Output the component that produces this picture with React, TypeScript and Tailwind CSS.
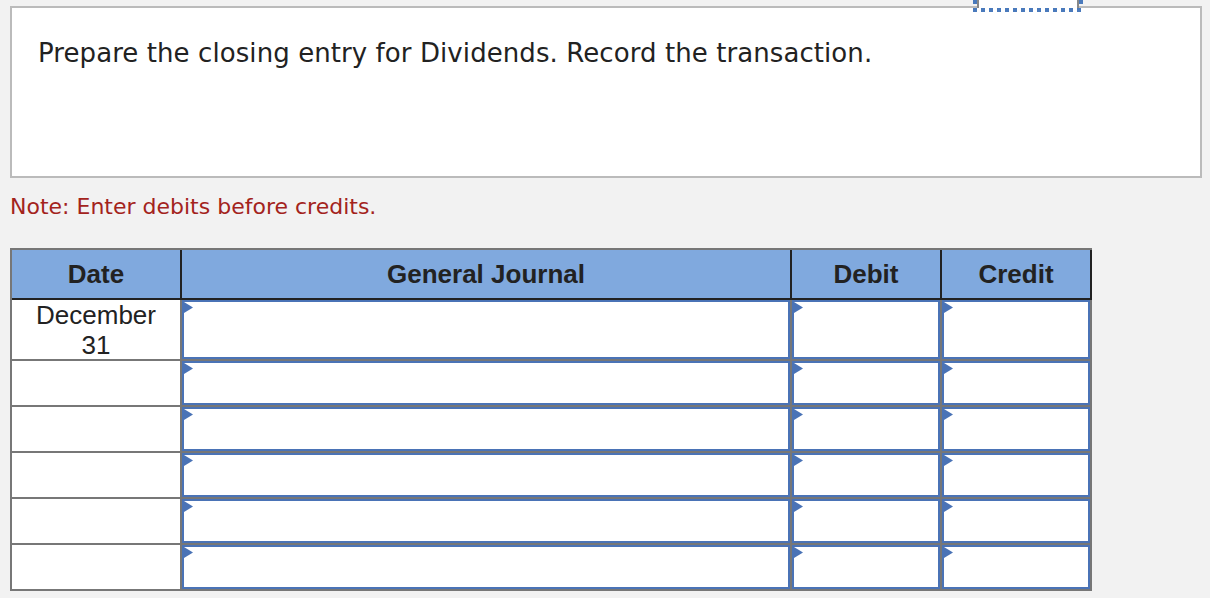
import React from 'react';

const rows = [true, false, false, false, false, false];

function Marker() {
  return (
    <svg className="absolute left-0 top-0" width="9" height="11" viewBox="0 0 9 11">
      <polygon points="0,0 9,5.5 0,11" fill="#4a73b6" />
    </svg>
  );
}

function InputCell({ width }: { width: string }) {
  return (
    <div className={`${width} border-r-2 border-[#777] h-full`}>
      <div className="relative h-full border-2 border-[#4a73b6] bg-white">
        <Marker />
      </div>
    </div>
  );
}

export default function App() {
  return (
    <div
      className="relative min-h-screen bg-[#f2f2f2] pt-[6px] pl-[10px]"
      style={{ fontFamily: '"DejaVu Sans", Verdana, sans-serif' }}
    >
      {/* focus fragment at the top */}
      <div className="absolute left-[973px] top-0 w-[110px] h-[12px]">
        <div className="mx-[4px] h-[8px] bg-white border-x-2 border-[#888]"></div>
        <div className="absolute left-0 top-0 w-[4px] h-[4px] bg-[#4a7abc]"></div>
        <div className="absolute right-0 top-0 w-[4px] h-[4px] bg-[#4a7abc]"></div>
        <div className="h-[4px] bg-[repeating-linear-gradient(90deg,#4a7abc_0px,#4a7abc_4px,transparent_4px,transparent_8px)]"></div>
      </div>

      {/* Prompt box */}
      <div className="w-[1192px] h-[172px] border-2 border-[#bbb] bg-white pl-[26px] pt-[30px]">
        <p className="text-[26px] leading-[30px] tracking-[0.08px] text-[#222]">
          Prepare the closing entry for Dividends. Record the transaction.
        </p>
      </div>

      <p className="mt-[16px] text-[22px] leading-[26px] text-[#a3231c]">
        Note: Enter debits before credits.
      </p>

      {/* Journal table */}
      <div
        className="mt-[28px] w-[1082px] border-t-2 border-l-2 border-[#777]"
        style={{ fontFamily: '"Liberation Sans", Arial, sans-serif' }}
      >
        <div className="flex h-[50px] bg-[#80a9de] text-[26px] font-bold text-[#222]">
          <div className="w-[170px] border-r-2 border-b-2 border-[#222] flex items-center justify-center">Date</div>
          <div className="w-[610px] border-r-2 border-b-2 border-[#222] flex items-center justify-center">General Journal</div>
          <div className="w-[150px] border-r-2 border-b-2 border-[#222] flex items-center justify-center">Debit</div>
          <div className="w-[150px] border-r-2 border-b-2 border-[#222] flex items-center justify-center">Credit</div>
        </div>
        {rows.map((first, i) => (
          <div key={i} className={`flex border-b-2 border-[#777] ${first ? 'h-[61px]' : 'h-[46px]'}`}>
            <div className="w-[170px] border-r-2 border-[#777] bg-white flex items-center justify-center text-center text-[26px] leading-[30px] text-[#222]">
              {first ? (
                <span>
                  December
                  <br />
                  31
                </span>
              ) : null}
            </div>
            <InputCell width="w-[610px]" />
            <InputCell width="w-[150px]" />
            <InputCell width="w-[150px]" />
          </div>
        ))}
      </div>
    </div>
  );
}
